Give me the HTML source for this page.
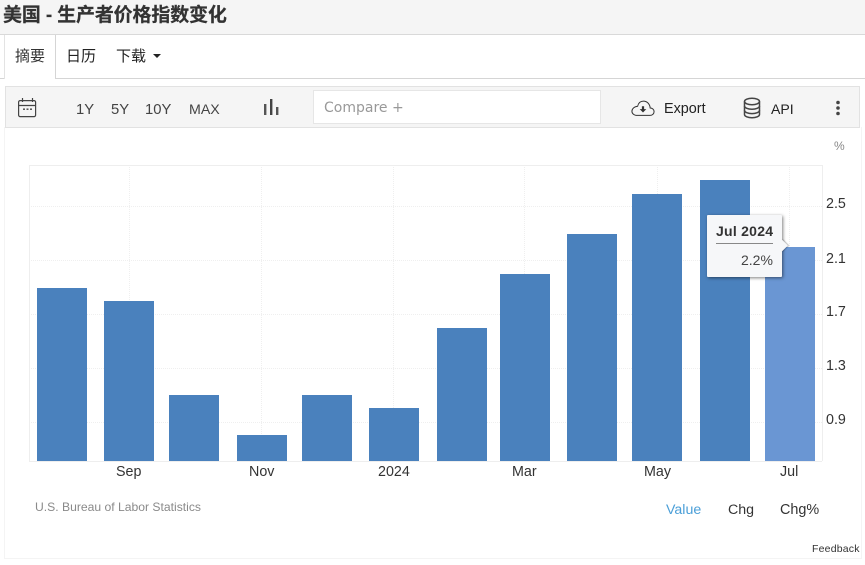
<!DOCTYPE html>
<html><head><meta charset="utf-8">
<style>
html,body{margin:0;padding:0;background:#fff}
body{width:865px;height:565px;overflow:hidden;position:relative;font-family:"Liberation Sans","Noto Sans CJK SC",sans-serif;color:#333}
.a{position:absolute;white-space:nowrap}
.b{position:absolute;width:50px;background:#4a81bd;bottom:104px}
.t{position:absolute;font-size:14.3px;line-height:16px;color:#333}
</style></head><body>
<div class="a" style="left:0;top:0;width:865px;height:34px;background:#f5f5f5;border-bottom:1px solid #d9d9d9"></div>
<div class="a" style="left:3px;top:4px;font-size:19px;line-height:24px;font-weight:bold;color:#333;letter-spacing:-.15px;-webkit-text-stroke:.2px #333">美国 - 生产者价格指数变化</div>
<div class="a" style="left:0;top:78px;width:865px;height:1px;background:#d5d5d5"></div>
<div class="a" style="left:4px;top:35px;width:50px;height:44px;background:#fff;border-left:1px solid #e3e3e3;border-right:1px solid #d5d5d5"></div>
<div class="a" style="left:15px;top:47px;font-size:15px;line-height:20px;color:#333">摘要</div>
<div class="a" style="left:66px;top:47px;font-size:15px;line-height:20px;color:#222">日历</div>
<div class="a" style="left:116px;top:47px;font-size:15px;line-height:20px;color:#222">下载</div>
<div class="a" style="left:153px;top:54px;width:0;height:0;border-left:4px solid transparent;border-right:4px solid transparent;border-top:4px solid #222"></div>

<div class="a" style="left:5px;top:86px;width:853px;height:40px;background:#f5f5f5;border:1px solid #e2e2e2"></div>
<svg class="a" style="left:17px;top:97px" width="21" height="22" viewBox="0 0 21 22" fill="none" stroke="#444" stroke-width="1.2"><rect x="1.6" y="3.6" width="17" height="16" rx="1.5"/><path d="M1.6 8.5H18.6M5.5 1V5M15.5 1V5"/><path d="M6 12.2h2M9.5 12.2h2M13 12.2h2" stroke-width="1.3"/></svg>
<div class="a" style="left:76px;top:101px;font-size:14.8px;line-height:18px;color:#444">1Y</div>
<div class="a" style="left:111px;top:101px;font-size:14.8px;line-height:18px;color:#444">5Y</div>
<div class="a" style="left:145px;top:101px;font-size:14.8px;line-height:18px;color:#444">10Y</div>
<div class="a" style="left:189px;top:101px;font-size:14.2px;line-height:18px;color:#444">MAX</div>
<svg class="a" style="left:262px;top:98px" width="18" height="18" viewBox="0 0 18 18"><rect x="2" y="6" width="2.4" height="11" fill="#555"/><rect x="8" y="1" width="2.4" height="16" fill="#444"/><rect x="14" y="9" width="2.4" height="8" fill="#555"/></svg>
<div class="a" style="left:313px;top:90px;width:286px;height:32px;background:#fff;border:1px solid #e6e6e6"></div>
<div class="a" style="left:324px;top:98px;line-height:20px;color:#999;font-family:'DejaVu Sans','Liberation Sans',sans-serif;font-size:14px">Compare +</div>
<svg class="a" style="left:631px;top:99px" width="24" height="19" viewBox="0 0 26 20" fill="none" stroke="#333" stroke-width="1.1"><path d="M6.5 17.5H20.5C23 17.5 25 15.8 25 13.4C25 11 23 9.5 20.8 9.5C20.4 5 17.2 2 13.6 2C10.4 2 8 4 7.2 7.5C3.8 8 1 10 1 13C1 15.600 3.4 17.5 6.5 17.5Z"/><path d="M11.8 7.5h2.4v3.2h2.4l-3.6 3.6l-3.6-3.6h2.4z" fill="#333" stroke="none"/></svg>
<div class="a" style="left:664px;top:101px;font-size:14.4px;line-height:17px;color:#222">Export</div>
<svg class="a" style="left:743px;top:97px" width="18" height="22" viewBox="0 0 18 22" fill="none" stroke="#444" stroke-width="1.5"><ellipse cx="9" cy="4.5" rx="7.5" ry="3.2"/><path d="M1.5 4.5V17.5C1.5 19.4 5 20.8 9 20.8S16.5 19.4 16.5 17.5V4.5"/><path d="M1.5 9C1.5 10.9 5 12.2 9 12.2S16.5 10.900 16.5 9M1.5 13.4C1.5 15.3 5 16.6 9 16.6S16.5 15.3 16.5 13.4"/></svg>
<div class="a" style="left:771px;top:101px;font-size:14.1px;line-height:17px;color:#222">API</div>
<svg class="a" style="left:835px;top:100px" width="6" height="16" viewBox="0 0 6 16" fill="#444"><circle cx="3" cy="2.500" r="1.8"/><circle cx="3" cy="8" r="1.8"/><circle cx="3" cy="13.500" r="1.8"/></svg>

<div class="a" style="left:4px;top:127px;width:856px;height:431px;border-left:1px solid #f4f4f4;border-right:1px solid #f4f4f4;border-bottom:1px solid #f4f4f4"></div>

<svg class="a" style="left:0;top:0" width="865" height="565">
<g stroke="#efefef" stroke-width="1" fill="none" stroke-dasharray="1 1">
<path d="M29 206.500H822M29 260.500H822M29 314.500H822M29 368.500H822M29 422.500H822"/>
<path d="M129.500 165V461M261.500 165V461M393.500 165V461M524.500 165V461M657.500 165V461M789.500 165V461"/>
</g>
<path d="M29 165.500H822M29.500 165V461M822.500 165V461M29 461.500H822" stroke="#eeeeee" fill="none"/>
</svg>

<div class="b" style="left:37px;height:173px"></div>
<div class="b" style="left:104px;height:160px"></div>
<div class="b" style="left:169px;height:66px"></div>
<div class="b" style="left:237px;height:26px"></div>
<div class="b" style="left:302px;height:66px"></div>
<div class="b" style="left:369px;height:53px"></div>
<div class="b" style="left:437px;height:133px"></div>
<div class="b" style="left:500px;height:187px"></div>
<div class="b" style="left:567px;height:227px"></div>
<div class="b" style="left:632px;height:267px"></div>
<div class="b" style="left:700px;height:281px"></div>
<div class="b" style="left:765px;height:214px;background:#6a96d3"></div>

<div class="a" style="left:834px;top:139px;font-size:12px;line-height:14px;color:#888">%</div>
<div class="t" style="left:826px;top:196px">2.5</div>
<div class="t" style="left:826px;top:251px">2.1</div>
<div class="t" style="left:826px;top:304px">1.7</div>
<div class="t" style="left:826px;top:358px">1.3</div>
<div class="t" style="left:826px;top:412px">0.9</div>

<div class="t" style="left:116px;top:464px">Sep</div>
<div class="t" style="left:249px;top:464px">Nov</div>
<div class="t" style="left:378px;top:464px">2024</div>
<div class="t" style="left:512px;top:464px">Mar</div>
<div class="t" style="left:644px;top:464px">May</div>
<div class="t" style="left:780px;top:464px">Jul</div>

<div class="a" style="left:707px;top:215px;width:75px;height:62px;background:#f6f7f9;box-shadow:1px 1px 3px rgba(0,0,0,.5);border-radius:1px"></div>
<div class="a" style="left:777px;top:241px;width:9px;height:9px;background:#f6f7f9;transform:rotate(45deg);box-shadow:1px -1px 1px rgba(0,0,0,.25)"></div>
<div class="a" style="left:716px;top:223px;font-size:14px;line-height:16px;font-weight:bold;color:#333;letter-spacing:.25px">Jul 2024</div>
<div class="a" style="left:716px;top:243px;width:57px;height:1px;background:#888"></div>
<div class="a" style="left:741px;top:252px;font-size:14px;line-height:16px;color:#444">2.2%</div>

<div class="a" style="left:35px;top:500px;font-size:12.15px;line-height:14px;color:#8a8a8a">U.S. Bureau of Labor Statistics</div>
<div class="a" style="left:666px;top:502px;font-size:14.2px;line-height:16px;color:#4b9fd8">Value</div>
<div class="a" style="left:728px;top:502px;font-size:14.2px;line-height:16px;color:#333">Chg</div>
<div class="a" style="left:780px;top:502px;font-size:14.4px;line-height:16px;color:#333">Chg%</div>
<div class="a" style="left:812px;top:543px;font-size:10.500px;line-height:12px;color:#333;letter-spacing:.2px">Feedback</div>
</body></html>
